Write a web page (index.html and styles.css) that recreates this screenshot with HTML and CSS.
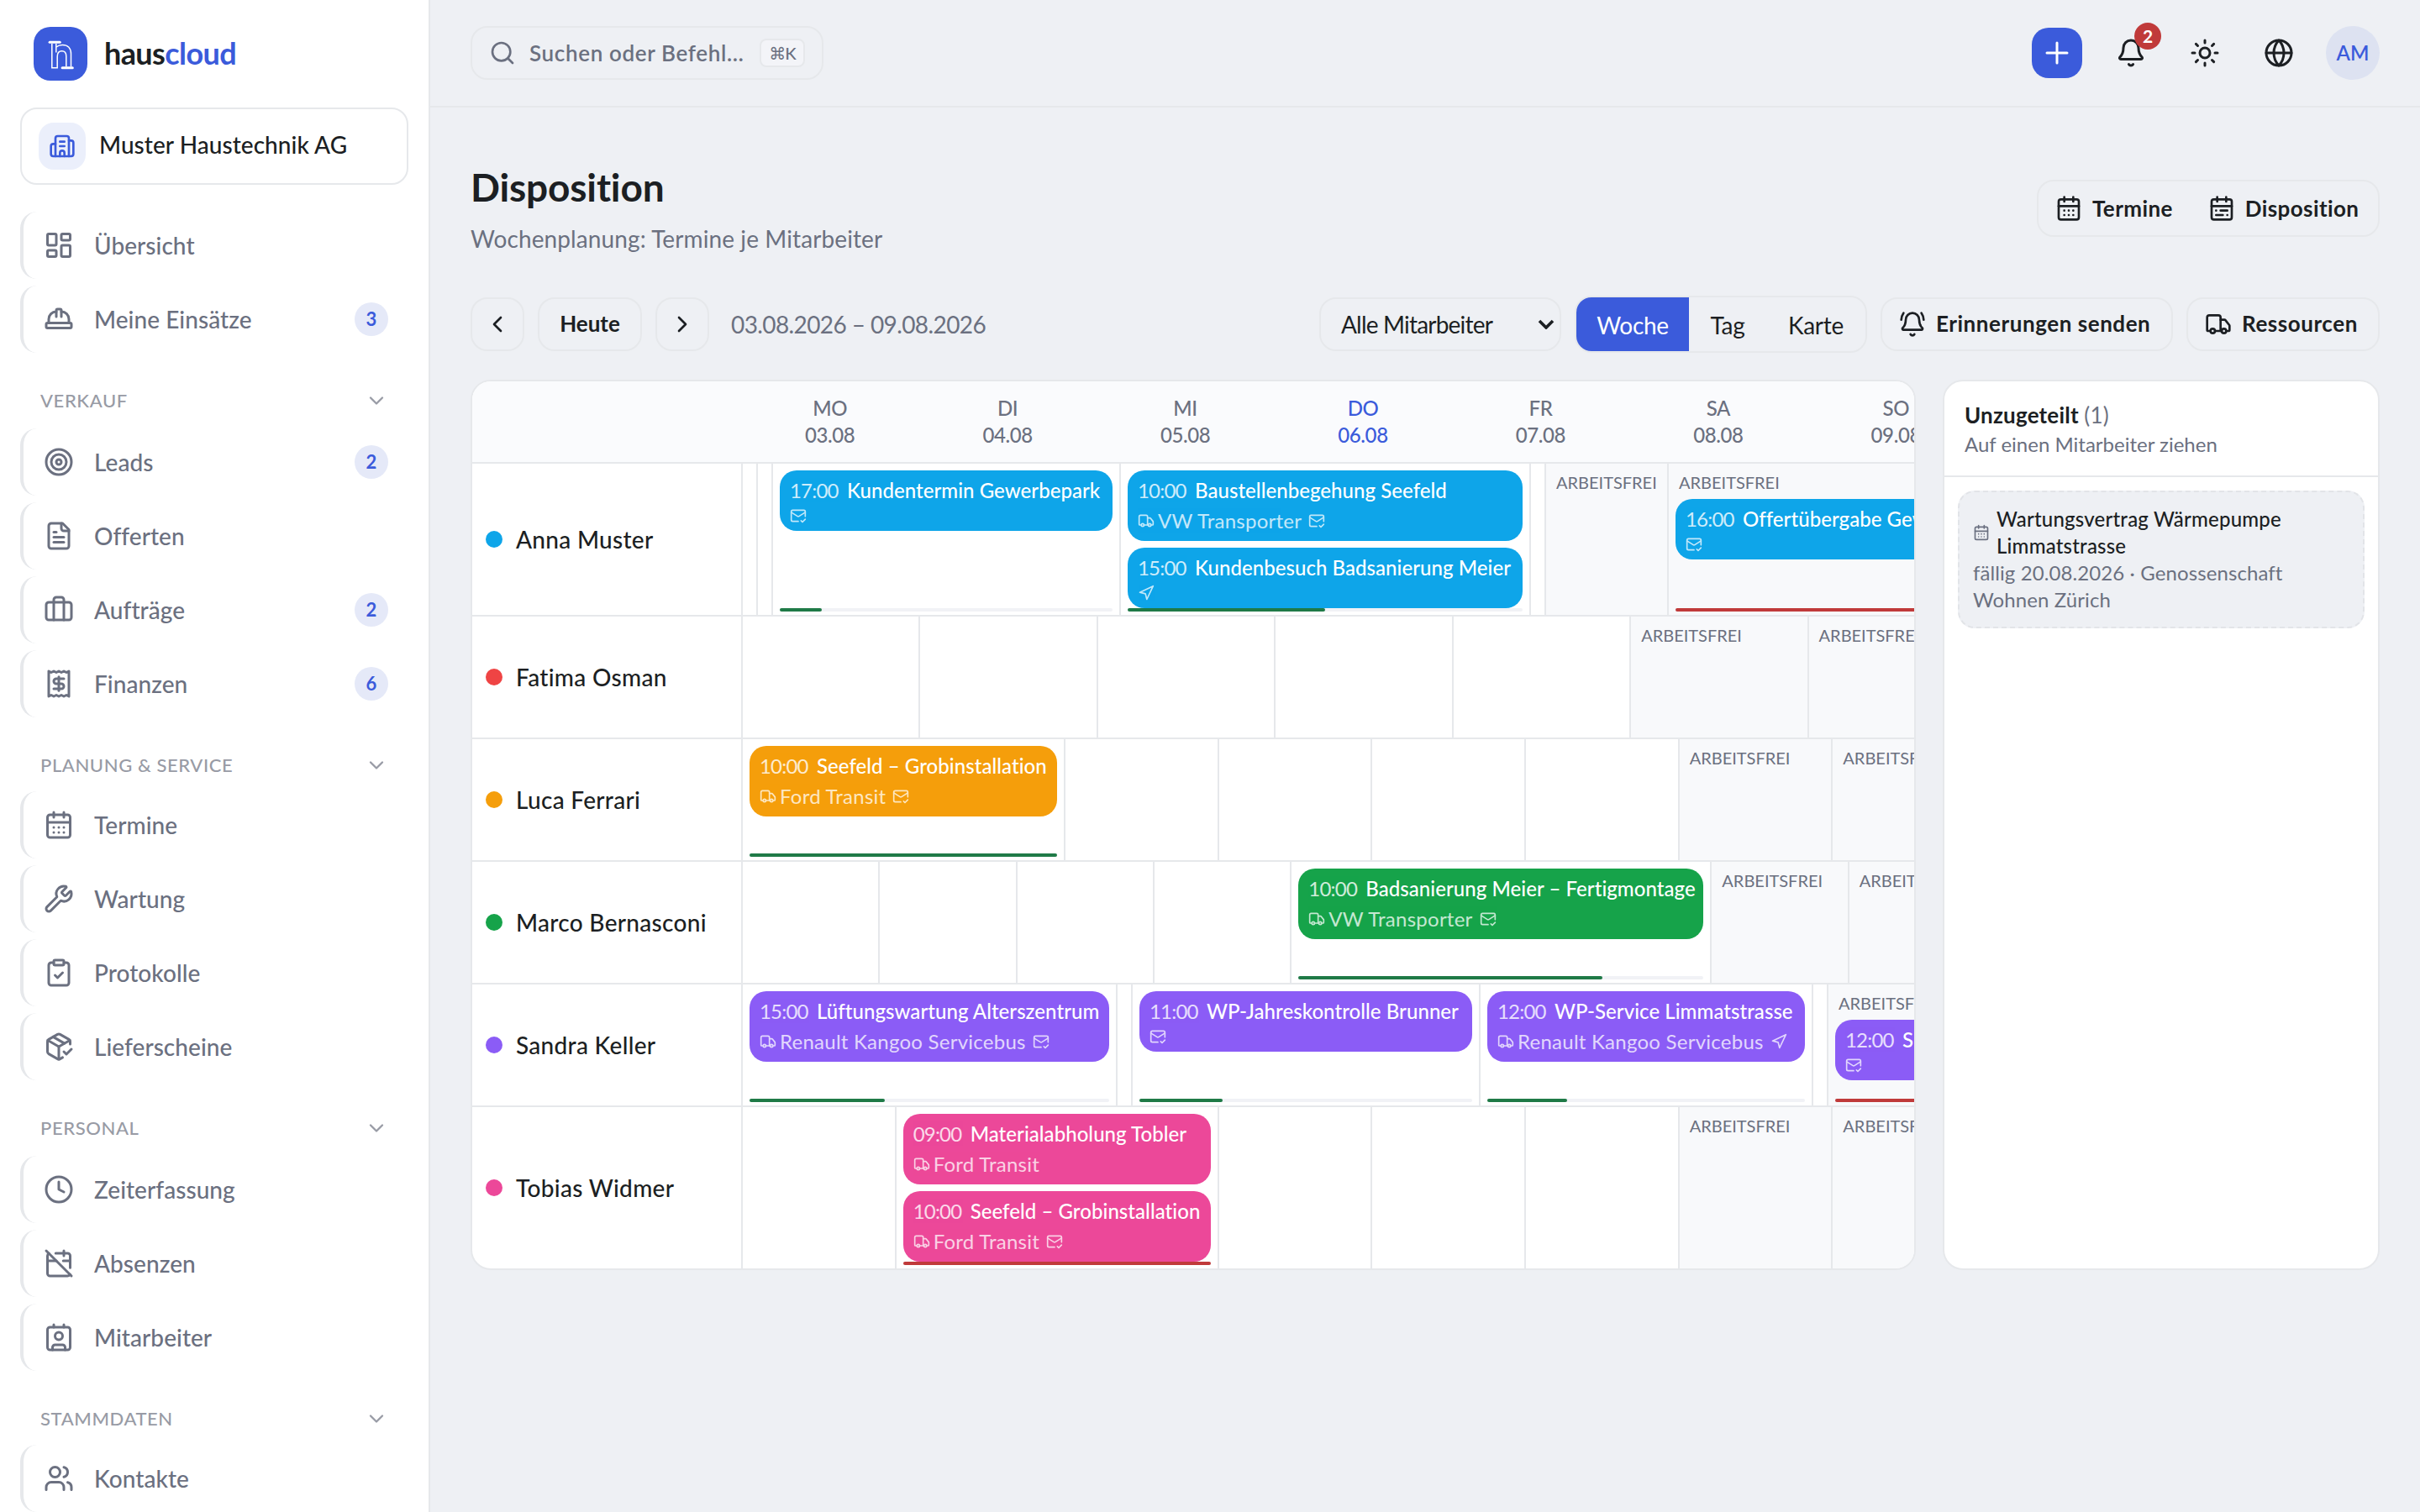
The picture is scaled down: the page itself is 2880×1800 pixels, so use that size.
FILE: index.html
```html
<!DOCTYPE html>
<html lang="de">
<head>
    <meta charset="UTF-8">
    <meta name="viewport" content="width=device-width, initial-scale=1.0">
    <title>Disposition – hauscloud</title>
    <link rel="stylesheet" href="styles.css">
</head>
<body>
    <svg class="sprite" aria-hidden="true">
        <symbol id="i-dashboard" viewBox="0 0 24 24"><rect width="7" height="9" x="3" y="3" rx="1"/><rect width="7" height="5" x="14" y="3" rx="1"/><rect width="7" height="9" x="14" y="12" rx="1"/><rect width="7" height="5" x="3" y="16" rx="1"/></symbol>
        <symbol id="i-helmet" viewBox="0 0 24 24"><path d="M10 10V5a1 1 0 0 1 1-1h2a1 1 0 0 1 1 1v5"/><path d="M14 6a6 6 0 0 1 6 6v3"/><path d="M4 15v-3a6 6 0 0 1 6-6"/><rect x="2" y="15" width="20" height="4" rx="1"/></symbol>
        <symbol id="i-target" viewBox="0 0 24 24"><circle cx="12" cy="12" r="10"/><circle cx="12" cy="12" r="6"/><circle cx="12" cy="12" r="2"/></symbol>
        <symbol id="i-file" viewBox="0 0 24 24"><path d="M15 2H6a2 2 0 0 0-2 2v16a2 2 0 0 0 2 2h12a2 2 0 0 0 2-2V7Z"/><path d="M14 2v4a2 2 0 0 0 2 2h4"/><path d="M10 9H8"/><path d="M16 13H8"/><path d="M16 17H8"/></symbol>
        <symbol id="i-briefcase" viewBox="0 0 24 24"><path d="M16 20V4a2 2 0 0 0-2-2h-4a2 2 0 0 0-2 2v16"/><rect width="20" height="14" x="2" y="6" rx="2"/></symbol>
        <symbol id="i-receipt" viewBox="0 0 24 24"><path d="M4 2v20l2-1 2 1 2-1 2 1 2-1 2 1 2-1 2 1V2l-2 1-2-1-2 1-2-1-2 1-2-1-2 1Z"/><path d="M16 8h-6a2 2 0 1 0 0 4h4a2 2 0 1 1 0 4H8"/><path d="M12 17.5v-11"/></symbol>
        <symbol id="i-calendar" viewBox="0 0 24 24"><path d="M8 2v4"/><path d="M16 2v4"/><rect width="18" height="18" x="3" y="4" rx="2"/><path d="M3 10h18"/><path d="M8 14h.01M12 14h.01M16 14h.01M8 18h.01M12 18h.01M16 18h.01"/></symbol>
        <symbol id="i-range" viewBox="0 0 24 24"><rect width="18" height="18" x="3" y="4" rx="2"/><path d="M16 2v4"/><path d="M3 10h18"/><path d="M8 2v4"/><path d="M17 14h-6"/><path d="M13 18H7"/><path d="M7 14h.01"/><path d="M17 18h.01"/></symbol>
        <symbol id="i-wrench" viewBox="0 0 24 24"><path d="M14.7 6.3a1 1 0 0 0 0 1.4l1.6 1.6a1 1 0 0 0 1.4 0l3.106-3.105c.32-.322.863-.22.983.218a6 6 0 0 1-8.259 7.057l-7.91 7.91a1 1 0 0 1-2.999-3l7.91-7.91a6 6 0 0 1 7.057-8.259c.438.12.54.662.219.984z"/></symbol>
        <symbol id="i-clipboard" viewBox="0 0 24 24"><rect width="8" height="4" x="8" y="2" rx="1"/><path d="M16 4h2a2 2 0 0 1 2 2v14a2 2 0 0 1-2 2H6a2 2 0 0 1-2-2V6a2 2 0 0 1 2-2h2"/><path d="m9 14 2 2 4-4"/></symbol>
        <symbol id="i-package" viewBox="0 0 24 24"><path d="m16 16 2 2 4-4"/><path d="M21 10V8a2 2 0 0 0-1-1.73l-7-4a2 2 0 0 0-2 0l-7 4A2 2 0 0 0 3 8v8a2 2 0 0 0 1 1.73l7 4a2 2 0 0 0 2 0l2-1.14"/><path d="m7.5 4.27 9 5.15"/><path d="M3.29 7 12 12l8.71-5"/><path d="M12 22V12"/></symbol>
        <symbol id="i-clock" viewBox="0 0 24 24"><circle cx="12" cy="12" r="10"/><path d="M12 6v6l4 2"/></symbol>
        <symbol id="i-cal-off" viewBox="0 0 24 24"><path d="M4.2 4.2A2 2 0 0 0 3 6v14a2 2 0 0 0 2 2h14a2 2 0 0 0 1.82-1.18"/><path d="M21 15.5V6a2 2 0 0 0-2-2H9.5"/><path d="M16 2v4"/><path d="M3 10h7"/><path d="M21 10h-5.5"/><path d="m2 2 20 20"/></symbol>
        <symbol id="i-contact" viewBox="0 0 24 24"><path d="M16 2v2"/><path d="M7 22v-2a2 2 0 0 1 2-2h6a2 2 0 0 1 2 2v2"/><path d="M8 2v2"/><circle cx="12" cy="11" r="3"/><rect x="3" y="4" width="18" height="18" rx="2"/></symbol>
        <symbol id="i-users" viewBox="0 0 24 24"><path d="M16 21v-2a4 4 0 0 0-4-4H6a4 4 0 0 0-4 4v2"/><circle cx="9" cy="7" r="4"/><path d="M22 21v-2a4 4 0 0 0-3-3.87"/><path d="M16 3.13a4 4 0 0 1 0 7.75"/></symbol>
        <symbol id="i-building" viewBox="0 0 24 24"><path d="M10 12h4"/><path d="M10 8h4"/><path d="M14 21v-3a2 2 0 0 0-4 0v3"/><path d="M6 10H4a2 2 0 0 0-2 2v7a2 2 0 0 0 2 2h16a2 2 0 0 0 2-2V9a2 2 0 0 0-2-2h-2"/><path d="M6 21V5a2 2 0 0 1 2-2h8a2 2 0 0 1 2 2v16"/></symbol>
        <symbol id="i-search" viewBox="0 0 24 24"><path d="m21 21-4.34-4.34"/><circle cx="11" cy="11" r="8"/></symbol>
        <symbol id="i-plus" viewBox="0 0 24 24"><path d="M4 12h16"/><path d="M12 4v16"/></symbol>
        <symbol id="i-bell" viewBox="0 0 24 24"><path d="M10.268 21a2 2 0 0 0 3.464 0"/><path d="M3.262 15.326A1 1 0 0 0 4 17h16a1 1 0 0 0 .74-1.673C19.41 13.956 18 12.499 18 8A6 6 0 0 0 6 8c0 4.499-1.411 5.956-2.738 7.326"/></symbol>
        <symbol id="i-bell-ring" viewBox="0 0 24 24"><path d="M10.268 21a2 2 0 0 0 3.464 0"/><path d="M22 8c0-2.3-.8-4.3-2-6"/><path d="M3.262 15.326A1 1 0 0 0 4 17h16a1 1 0 0 0 .74-1.673C19.41 13.956 18 12.499 18 8A6 6 0 0 0 6 8c0 4.499-1.411 5.956-2.738 7.326"/><path d="M4 2C2.8 3.7 2 5.7 2 8"/></symbol>
        <symbol id="i-sun" viewBox="0 0 24 24"><circle cx="12" cy="12" r="4"/><path d="M12 2v2"/><path d="M12 20v2"/><path d="m4.93 4.93 1.41 1.41"/><path d="m17.66 17.66 1.41 1.41"/><path d="M2 12h2"/><path d="M20 12h2"/><path d="m6.34 17.66-1.41 1.41"/><path d="m19.07 4.93-1.41 1.41"/></symbol>
        <symbol id="i-globe" viewBox="0 0 24 24"><circle cx="12" cy="12" r="10"/><path d="M12 2a14.5 14.5 0 0 0 0 20 14.5 14.5 0 0 0 0-20"/><path d="M2 12h20"/></symbol>
        <symbol id="i-truck" viewBox="0 0 24 24"><path d="M14 18V6a2 2 0 0 0-2-2H4a2 2 0 0 0-2 2v11a1 1 0 0 0 1 1h2"/><path d="M15 18H9"/><path d="M19 18h2a1 1 0 0 0 1-1v-3.65a1 1 0 0 0-.22-.624l-3.48-4.35A1 1 0 0 0 17.52 8H14"/><circle cx="17" cy="18" r="2"/><circle cx="7" cy="18" r="2"/></symbol>
        <symbol id="i-mail" viewBox="0 0 24 24"><path d="M22 13V6a2 2 0 0 0-2-2H4a2 2 0 0 0-2 2v12c0 1.1.9 2 2 2h8"/><path d="m22 7-8.97 5.7a1.94 1.94 0 0 1-2.06 0L2 7"/><path d="m16 19 2 2 4-4"/></symbol>
        <symbol id="i-nav" viewBox="0 0 24 24"><path d="M3 11 22 2l-9 19-2-8-8-2z"/></symbol>
        <symbol id="i-down" viewBox="0 0 24 24"><path d="m6 9 6 6 6-6"/></symbol>
        <symbol id="i-left" viewBox="0 0 24 24"><path d="m15 18-6-6 6-6"/></symbol>
        <symbol id="i-right" viewBox="0 0 24 24"><path d="m9 18 6-6-6-6"/></symbol>
    </svg>

    <div class="app">
        <aside class="sidebar">
            <div class="brand">
                <svg class="logo" viewBox="0 0 64 64">
                    <rect width="64" height="64" rx="20" fill="#3b5bdb"/>
                    <g fill="none" stroke="#fff" stroke-width="1.5">
                        <path d="M21.8 20v28.8h6.4V35.5c0-4 2-6.7 5.4-6.7s5.2 2.5 5.2 6.2v12.5"/>
                        <path d="M26.8 20v10.5"/>
                        <path d="M27 24c2-1.8 4.6-2.6 7.4-2.6 6.4 0 10.1 4.2 10.1 10.6v15.5"/>
                    </g>
                    <g fill="#fff">
                        <rect x="17.6" y="16.8" width="15.2" height="3" rx="1.5"/>
                        <rect x="32.6" y="47.3" width="15.2" height="3" rx="1.5"/>
                    </g>
                </svg>
                <div class="brand-name">haus<span>cloud</span></div>
            </div>
            <div class="company">
                <div class="company-icon"><svg class="icon"><use href="#i-building"/></svg></div>
                <div class="company-name">Muster Haustechnik AG</div>
            </div>

            <nav class="nav">
                <a class="nav-item"><svg class="icon"><use href="#i-dashboard"/></svg><span>Übersicht</span></a>
                <a class="nav-item"><svg class="icon"><use href="#i-helmet"/></svg><span>Meine Einsätze</span><b class="count">3</b></a>
            </nav>
            <div class="nav-head">Verkauf<svg class="icon"><use href="#i-down"/></svg></div>
            <nav class="nav">
                <a class="nav-item"><svg class="icon"><use href="#i-target"/></svg><span>Leads</span><b class="count">2</b></a>
                <a class="nav-item"><svg class="icon"><use href="#i-file"/></svg><span>Offerten</span></a>
                <a class="nav-item"><svg class="icon"><use href="#i-briefcase"/></svg><span>Aufträge</span><b class="count">2</b></a>
                <a class="nav-item"><svg class="icon"><use href="#i-receipt"/></svg><span>Finanzen</span><b class="count">6</b></a>
            </nav>
            <div class="nav-head tight">Planung &amp; Service<svg class="icon"><use href="#i-down"/></svg></div>
            <nav class="nav">
                <a class="nav-item"><svg class="icon"><use href="#i-calendar"/></svg><span>Termine</span></a>
                <a class="nav-item"><svg class="icon"><use href="#i-wrench"/></svg><span>Wartung</span></a>
                <a class="nav-item"><svg class="icon"><use href="#i-clipboard"/></svg><span>Protokolle</span></a>
                <a class="nav-item"><svg class="icon"><use href="#i-package"/></svg><span>Lieferscheine</span></a>
            </nav>
            <div class="nav-head">Personal<svg class="icon"><use href="#i-down"/></svg></div>
            <nav class="nav">
                <a class="nav-item"><svg class="icon"><use href="#i-clock"/></svg><span>Zeiterfassung</span></a>
                <a class="nav-item"><svg class="icon"><use href="#i-cal-off"/></svg><span>Absenzen</span></a>
                <a class="nav-item"><svg class="icon"><use href="#i-contact"/></svg><span>Mitarbeiter</span></a>
            </nav>
            <div class="nav-head tight">Stammdaten<svg class="icon"><use href="#i-down"/></svg></div>
            <nav class="nav">
                <a class="nav-item"><svg class="icon"><use href="#i-users"/></svg><span>Kontakte</span></a>
            </nav>
        </aside>

        <div class="content">
            <header class="topbar">
                <div class="search">
                    <svg class="icon"><use href="#i-search"/></svg>
                    <span class="search-text">Suchen oder Befehl…</span>
                    <kbd>⌘K</kbd>
                </div>
                <div class="actions">
                    <button class="add"><svg class="icon"><use href="#i-plus"/></svg></button>
                    <button class="action"><svg class="icon"><use href="#i-bell"/></svg><span class="alert">2</span></button>
                    <button class="action"><svg class="icon"><use href="#i-sun"/></svg></button>
                    <button class="action"><svg class="icon"><use href="#i-globe"/></svg></button>
                    <div class="avatar">AM</div>
                </div>
            </header>

            <main class="page">
                <div class="page-head">
                    <div>
                        <h1>Disposition</h1>
                        <p class="subtitle">Wochenplanung: Termine je Mitarbeiter</p>
                    </div>
                    <div class="switch">
                        <a><svg class="icon"><use href="#i-calendar"/></svg>Termine</a>
                        <a><svg class="icon"><use href="#i-range"/></svg>Disposition</a>
                    </div>
                </div>

                <div class="toolbar">
                    <button class="btn square"><svg class="icon"><use href="#i-left"/></svg></button>
                    <button class="btn today"><span>Heute</span></button>
                    <button class="btn square"><svg class="icon"><use href="#i-right"/></svg></button>
                    <span class="range">03.08.2026 – 09.08.2026</span>
                    <div class="select">Alle Mitarbeiter<svg viewBox="0 0 20 12"><path d="M2 2l8 8 8-8"/></svg></div>
                    <div class="tabs">
                        <span class="tab active">Woche</span>
                        <span class="tab">Tag</span>
                        <span class="tab wide">Karte</span>
                    </div>
                    <button class="btn remind"><svg class="icon"><use href="#i-bell-ring"/></svg><span>Erinnerungen senden</span></button>
                    <button class="btn resources"><svg class="icon"><use href="#i-truck"/></svg><span>Ressourcen</span></button>
                </div>

                <div class="planner">
                    <section class="board">
                        <div class="row head">
                            <div class="corner"></div>
                            <div class="day">MO<br>03.08</div>
                            <div class="day">DI<br>04.08</div>
                            <div class="day">MI<br>05.08</div>
                            <div class="day current">DO<br>06.08</div>
                            <div class="day">FR<br>07.08</div>
                            <div class="day">SA<br>08.08</div>
                            <div class="day">SO<br>09.08</div>
                        </div>

                        <div class="row anna">
                            <div class="name"><i class="dot"></i>Anna Muster</div>
                            <div class="cell"></div>
                            <div class="cell"></div>
                            <div class="cell">
                                <div class="event">
                                    <div class="line"><time>17:00</time>Kundentermin Gewerbepark</div>
                                    <div class="meta"><svg class="icon"><use href="#i-mail"/></svg></div>
                                </div>
                                <div class="load"><div class="fill" style="width: 12.5%"></div></div>
                            </div>
                            <div class="cell">
                                <div class="event">
                                    <div class="line"><time>10:00</time>Baustellenbegehung Seefeld</div>
                                    <div class="meta car"><svg class="icon"><use href="#i-truck"/></svg><span>VW Transporter</span><svg class="icon"><use href="#i-mail"/></svg></div>
                                </div>
                                <div class="event">
                                    <div class="line"><time>15:00</time>Kundenbesuch Badsanierung Meier</div>
                                    <div class="meta"><svg class="icon"><use href="#i-nav"/></svg></div>
                                </div>
                                <div class="load"><div class="fill" style="width: 50%"></div></div>
                            </div>
                            <div class="cell"></div>
                            <div class="cell off"><div class="free">Arbeitsfrei</div></div>
                            <div class="cell off">
                                <div class="free">Arbeitsfrei</div>
                                <div class="event">
                                    <div class="line"><time>16:00</time>Offertübergabe Gewerbepark</div>
                                    <div class="meta"><svg class="icon"><use href="#i-mail"/></svg></div>
                                </div>
                                <div class="load"><div class="fill over" style="width: 100%"></div></div>
                            </div>
                        </div>

                        <div class="row fatima">
                            <div class="name"><i class="dot"></i>Fatima Osman</div>
                            <div class="cell"></div>
                            <div class="cell"></div>
                            <div class="cell"></div>
                            <div class="cell"></div>
                            <div class="cell"></div>
                            <div class="cell off"><div class="free">Arbeitsfrei</div></div>
                            <div class="cell off"><div class="free">Arbeitsfrei</div></div>
                        </div>

                        <div class="row luca">
                            <div class="name"><i class="dot"></i>Luca Ferrari</div>
                            <div class="cell">
                                <div class="event">
                                    <div class="line"><time>10:00</time>Seefeld – Grobinstallation</div>
                                    <div class="meta car"><svg class="icon"><use href="#i-truck"/></svg><span>Ford Transit</span><svg class="icon"><use href="#i-mail"/></svg></div>
                                </div>
                                <div class="load"><div class="fill" style="width: 100%"></div></div>
                            </div>
                            <div class="cell"></div>
                            <div class="cell"></div>
                            <div class="cell"></div>
                            <div class="cell"></div>
                            <div class="cell off"><div class="free">Arbeitsfrei</div></div>
                            <div class="cell off"><div class="free">Arbeitsfrei</div></div>
                        </div>

                        <div class="row marco">
                            <div class="name"><i class="dot"></i>Marco Bernasconi</div>
                            <div class="cell"></div>
                            <div class="cell"></div>
                            <div class="cell"></div>
                            <div class="cell"></div>
                            <div class="cell">
                                <div class="event">
                                    <div class="line"><time>10:00</time>Badsanierung Meier – Fertigmontage</div>
                                    <div class="meta car"><svg class="icon"><use href="#i-truck"/></svg><span>VW Transporter</span><svg class="icon"><use href="#i-mail"/></svg></div>
                                </div>
                                <div class="load"><div class="fill" style="width: 75%"></div></div>
                            </div>
                            <div class="cell off"><div class="free">Arbeitsfrei</div></div>
                            <div class="cell off"><div class="free">Arbeitsfrei</div></div>
                        </div>

                        <div class="row sandra">
                            <div class="name"><i class="dot"></i>Sandra Keller</div>
                            <div class="cell">
                                <div class="event">
                                    <div class="line"><time>15:00</time>Lüftungswartung Alterszentrum</div>
                                    <div class="meta car"><svg class="icon"><use href="#i-truck"/></svg><span>Renault Kangoo Servicebus</span><svg class="icon"><use href="#i-mail"/></svg></div>
                                </div>
                                <div class="load"><div class="fill" style="width: 37.5%"></div></div>
                            </div>
                            <div class="cell"></div>
                            <div class="cell">
                                <div class="event">
                                    <div class="line"><time>11:00</time>WP-Jahreskontrolle Brunner</div>
                                    <div class="meta"><svg class="icon"><use href="#i-mail"/></svg></div>
                                </div>
                                <div class="load"><div class="fill" style="width: 25%"></div></div>
                            </div>
                            <div class="cell">
                                <div class="event">
                                    <div class="line"><time>12:00</time>WP-Service Limmatstrasse</div>
                                    <div class="meta car"><svg class="icon"><use href="#i-truck"/></svg><span>Renault Kangoo Servicebus</span><svg class="icon"><use href="#i-nav"/></svg></div>
                                </div>
                                <div class="load"><div class="fill" style="width: 25%"></div></div>
                            </div>
                            <div class="cell"></div>
                            <div class="cell off">
                                <div class="free">Arbeitsfrei</div>
                                <div class="event">
                                    <div class="line"><time>12:00</time>S</div>
                                    <div class="meta"><svg class="icon"><use href="#i-mail"/></svg></div>
                                </div>
                                <div class="load"><div class="fill over" style="width: 100%"></div></div>
                            </div>
                        </div>

                        <div class="row tobias">
                            <div class="name"><i class="dot"></i>Tobias Widmer</div>
                            <div class="cell"></div>
                            <div class="cell">
                                <div class="event">
                                    <div class="line"><time>09:00</time>Materialabholung Tobler</div>
                                    <div class="meta car"><svg class="icon"><use href="#i-truck"/></svg><span>Ford Transit</span></div>
                                </div>
                                <div class="event">
                                    <div class="line"><time>10:00</time>Seefeld – Grobinstallation</div>
                                    <div class="meta car"><svg class="icon"><use href="#i-truck"/></svg><span>Ford Transit</span><svg class="icon"><use href="#i-mail"/></svg></div>
                                </div>
                                <div class="load"><div class="fill over" style="width: 100%"></div></div>
                            </div>
                            <div class="cell"></div>
                            <div class="cell"></div>
                            <div class="cell"></div>
                            <div class="cell off"><div class="free">Arbeitsfrei</div></div>
                            <div class="cell off"><div class="free">Arbeitsfrei</div></div>
                        </div>
                    </section>

                    <aside class="pool">
                        <div class="pool-head">
                            <h2>Unzugeteilt <span>(1)</span></h2>
                            <p>Auf einen Mitarbeiter ziehen</p>
                        </div>
                        <div class="pool-list">
                            <div class="task">
                                <div class="task-title"><svg class="icon"><use href="#i-calendar"/></svg><span>Wartungsvertrag Wärmepumpe Limmatstrasse</span></div>
                                <div class="task-info">fällig 20.08.2026 · Genossenschaft Wohnen Zürich</div>
                            </div>
                        </div>
                    </aside>
                </div>
            </main>
        </div>
    </div>
</body>
</html>
```
FILE: styles.css
```css
* {
    box-sizing: border-box;
}

body {
    margin: 0;
    font-family: Lato, "Open Sans", sans-serif;
    font-size: 28px;
    color: #1c1f23;
    background-color: #eef0f4;
}

h1, h2, p {
    margin: 0;
}

button {
    font-family: inherit;
    color: inherit;
    padding: 0;
    background: none;
    border: none;
}

.sprite {
    display: none;
}

.icon {
    flex: none;
    width: 36px;
    height: 36px;
    fill: none;
    stroke: currentColor;
    stroke-width: 2;
    stroke-linecap: round;
    stroke-linejoin: round;
}

.app {
    display: flex;
    height: 1800px;
    overflow: hidden;
}

/* Sidebar */
.sidebar {
    flex: none;
    width: 512px;
    padding: 32px 24px 0;
    background-color: #fff;
    border-right: 2px solid #e6e8eb;
    overflow: hidden;
}

.brand {
    display: flex;
    align-items: center;
    gap: 20px;
    height: 64px;
    padding-left: 16px;
}

.logo {
    width: 64px;
    height: 64px;
}

.brand-name {
    padding-bottom: 2px;
    font-size: 36px;
    font-weight: 700;
    letter-spacing: -0.6px;
}

.brand-name span {
    color: #3b5bdb;
}

.company {
    display: flex;
    align-items: center;
    gap: 16px;
    height: 92px;
    margin: 32px 0;
    padding-left: 20px;
    border: 2px solid #e6e8eb;
    border-radius: 20px;
}

.company-icon {
    display: flex;
    align-items: center;
    justify-content: center;
    width: 56px;
    height: 56px;
    border-radius: 18px;
    background-color: #ebeffb;
    color: #3b5bdb;
}

.company-icon .icon {
    width: 32px;
    height: 32px;
}

.company-name {
    font-weight: 500;
    letter-spacing: 0.05px;
    padding-bottom: 4px;
}

.nav {
    display: flex;
    flex-direction: column;
    gap: 8px;
}

.nav-item {
    display: flex;
    align-items: center;
    height: 80px;
    padding: 0 24px;
    border-left: 4px solid #e6e8eb;
    border-radius: 20px;
    color: #6b7080;
    font-weight: 500;
    letter-spacing: 0.05px;
}

.nav-item span {
    margin-left: 24px;
}

.count {
    margin-left: auto;
    width: 40px;
    height: 40px;
    border-radius: 50%;
    background-color: #e5e9f8;
    color: #3b5bdb;
    font-size: 22px;
    font-weight: 700;
    line-height: 40px;
    text-align: center;
}

.nav-head {
    display: flex;
    align-items: center;
    justify-content: space-between;
    height: 90px;
    padding: 23px 24px 0 24px;
    font-size: 22px;
    font-weight: 500;
    letter-spacing: 0.6px;
    text-transform: uppercase;
    color: #989ba5;
}

.nav-head.tight {
    height: 88px;
    padding-top: 25px;
}

.nav-head .icon {
    width: 28px;
    height: 28px;
}

/* Top bar */
.content {
    flex: 1;
    min-width: 0;
}

.topbar {
    display: flex;
    align-items: center;
    justify-content: space-between;
    height: 128px;
    padding: 0 48px;
    border-bottom: 2px solid #e6e8eb;
}

.search {
    display: flex;
    align-items: center;
    width: 420px;
    height: 64px;
    padding: 0 20px;
    border: 2px solid #e6e8eb;
    border-radius: 20px;
    color: #6b7080;
}

.search .icon {
    width: 32px;
    height: 32px;
}

.search-text {
    margin-left: 16px;
    font-size: 26px;
    font-weight: 600;
    letter-spacing: 0.65px;
}

kbd {
    width: 54px;
    height: 34px;
    margin-left: auto;
    border: 2px solid #e6e8eb;
    border-radius: 8px;
    background-color: #f3f4f8;
    font: 500 20px/30px Lato, "DejaVu Sans", sans-serif;
    letter-spacing: -1px;
    text-align: center;
    white-space: nowrap;
}

.actions {
    display: flex;
    align-items: center;
    gap: 24px;
}

.add {
    display: flex;
    align-items: center;
    justify-content: center;
    width: 60px;
    height: 60px;
    margin-right: 2px;
    border-radius: 20px;
    background-color: #3b5bdb;
    color: #fff;
}

.action {
    position: relative;
    display: flex;
    align-items: center;
    justify-content: center;
    width: 64px;
    height: 64px;
}

.alert {
    position: absolute;
    top: -4px;
    right: -4px;
    width: 32px;
    height: 32px;
    border-radius: 50%;
    background-color: #c03a3a;
    color: #fff;
    font-size: 21px;
    font-weight: 700;
    line-height: 32px;
    text-align: center;
}

.avatar {
    width: 64px;
    height: 64px;
    border-radius: 50%;
    background-color: #dde2f1;
    color: #3b5bdb;
    font-size: 24px;
    font-weight: 600;
    line-height: 64px;
    text-align: center;
}

/* Page */
.page {
    padding: 64px 48px 0;
}

.page-head {
    display: flex;
    align-items: center;
    justify-content: space-between;
}

h1 {
    font-size: 46px;
    font-weight: 700;
    line-height: 62px;
    letter-spacing: -0.15px;
}

.subtitle {
    margin-top: 10px;
    line-height: 40px;
    color: #6b7080;
    letter-spacing: 0.1px;
}

.switch {
    display: flex;
    width: 408px;
    height: 68px;
    border: 2px solid #e6e8eb;
    border-radius: 20px;
}

.switch a {
    display: flex;
    align-items: center;
    gap: 12px;
    padding-left: 20px;
    font-size: 26px;
    font-weight: 700;
    letter-spacing: 0.4px;
}

.switch a + a {
    padding-left: 42px;
}

.switch .icon,
.toolbar .icon {
    width: 32px;
    height: 32px;
}

.toolbar {
    display: flex;
    align-items: center;
    gap: 16px;
    height: 68px;
    margin: 48px 0 32px;
}

.btn {
    display: flex;
    align-items: center;
    gap: 12px;
    height: 64px;
    border: 2px solid #e6e8eb;
    border-radius: 20px;
    font-size: 26px;
    font-weight: 700;
    letter-spacing: 0.55px;
    white-space: nowrap;
}

.btn span {
    padding-bottom: 2px;
}

.btn.square {
    justify-content: center;
    width: 64px;
}

.btn.today {
    justify-content: center;
    width: 124px;
    letter-spacing: 0;
}

.btn.remind {
    width: 348px;
    padding-left: 20px;
}

.btn.resources {
    width: 230px;
    padding-left: 20px;
}

.range {
    margin: 0 auto 0 10px;
    color: #6b7080;
    letter-spacing: -0.6px;
}

.select {
    display: flex;
    align-items: center;
    justify-content: space-between;
    width: 288px;
    height: 64px;
    padding: 0 6px 0 24px;
    border: 2px solid #e6e8eb;
    border-radius: 20px;
    letter-spacing: -0.8px;
}

.select svg {
    width: 20px;
    height: 12px;
    fill: none;
    stroke: #1c1f23;
    stroke-width: 3.6;
}

.tabs {
    display: flex;
    width: 348px;
    height: 68px;
    border: 2px solid #e6e8eb;
    border-radius: 20px;
    overflow: hidden;
}

.tab {
    width: 92px;
    line-height: 66px;
    text-align: center;
    letter-spacing: -0.3px;
}

.tab.wide {
    width: 118px;
}

.tab.active {
    width: 134px;
    background-color: #3b5bdb;
    color: #fff;
}

/* Planner */
.planner {
    display: flex;
    gap: 32px;
    height: 1060px;
}

.board {
    flex: none;
    width: 1720px;
    border: 2px solid #e6e8eb;
    border-radius: 24px;
    background-color: #fff;
    overflow: hidden;
}

.row {
    display: grid;
    width: 1800px;
    border-bottom: 2px solid #e6e8eb;
}

.row:last-child {
    border-bottom: none;
}

.head,
.fatima {
    grid-template-columns: 320px repeat(7, 1fr);
}

.anna {
    grid-template-columns: 320px 18px 18px 414px 488px 18px 146px 378px;
    --accent: #0ea5e9;
}

.fatima {
    --accent: #ef4444;
}

.luca {
    grid-template-columns: 320px 384px repeat(6, 1fr);
    --accent: #f59e0b;
}

.marco {
    grid-template-columns: 320px repeat(4, 1fr) 500px repeat(2, 1fr);
    --accent: #16a34a;
}

.sandra {
    grid-template-columns: 320px 446px 18px 414px 396px 18px 188px;
    --accent: #8b5cf6;
}

.tobias {
    grid-template-columns: 320px 1fr 384px repeat(5, 1fr);
    --accent: #ec4899;
}

.head {
    height: 98px;
    padding-top: 16px;
    background-color: #fafbfd;
    color: #6b7080;
}

.day {
    font-size: 24px;
    font-weight: 500;
    line-height: 32px;
    letter-spacing: -0.4px;
    text-align: center;
}

.day.current {
    color: #3b5bdb;
}

.name {
    display: flex;
    align-items: center;
    gap: 16px;
    padding-left: 16px;
    font-weight: 500;
    letter-spacing: 0.3px;
}

.dot {
    width: 20px;
    height: 20px;
    border-radius: 50%;
    background-color: var(--accent);
}

.cell {
    position: relative;
    display: flex;
    flex-direction: column;
    gap: 8px;
    min-width: 0;
    min-height: 144px;
    padding: 8px;
    border-left: 2px solid #e6e8eb;
}

.cell.off {
    background-color: #f8f9fb;
}

.free {
    height: 26px;
    padding-left: 4px;
    font-size: 20px;
    line-height: 29px;
    text-transform: uppercase;
    white-space: nowrap;
    color: #6b7080;
}

.event {
    padding: 8px 12px;
    border-radius: 20px;
    background-color: var(--accent);
    color: #fff;
    font-size: 24px;
    white-space: nowrap;
    overflow: hidden;
}

.line {
    height: 36px;
    line-height: 31px;
    font-weight: 500;
    letter-spacing: 0.05px;
}

.line time {
    display: inline-block;
    width: 68px;
    font-weight: 400;
    letter-spacing: -0.8px;
    opacity: 0.8;
}

.meta {
    display: flex;
    align-items: center;
    gap: 8px;
    height: 20px;
    opacity: 0.75;
    letter-spacing: 0.25px;
}

.meta.car {
    height: 32px;
}

.meta span {
    margin-left: -4px;
    padding-bottom: 2px;
}

.meta .icon {
    width: 20px;
    height: 20px;
}

.load {
    position: absolute;
    left: 8px;
    right: 8px;
    bottom: 4px;
    height: 4px;
    border-radius: 2px;
    background-color: #f1f2f6;
}

.fill {
    height: 4px;
    border-radius: 2px;
    background-color: #1f7a47;
}

.fill.over {
    background-color: #c03a3a;
}

/* Unassigned jobs */
.pool {
    flex: none;
    width: 520px;
    border: 2px solid #e6e8eb;
    border-radius: 24px;
    background-color: #fff;
}

.pool-head {
    height: 114px;
    padding: 22px 24px 0;
    border-bottom: 2px solid #e6e8eb;
}

h2 {
    font-size: 26px;
    font-weight: 700;
    line-height: 36px;
    letter-spacing: 0.2px;
}

h2 span {
    font-weight: 400;
    color: #6b7080;
}

.pool-head p {
    font-size: 24px;
    line-height: 34px;
    color: #6b7080;
}

.pool-list {
    padding: 16px;
}

.task {
    padding: 16px;
    border: 2px dashed #e2e4e8;
    border-radius: 20px;
    background-color: #eef0f4;
    font-size: 24px;
    line-height: 32px;
    letter-spacing: 0.2px;
}

.task-title {
    display: flex;
    align-items: center;
    gap: 8px;
    font-weight: 500;
}

.task-title .icon {
    width: 20px;
    height: 20px;
    color: #6b7080;
}

.task-info {
    color: #6b7080;
    letter-spacing: 0.1px;
}
```
